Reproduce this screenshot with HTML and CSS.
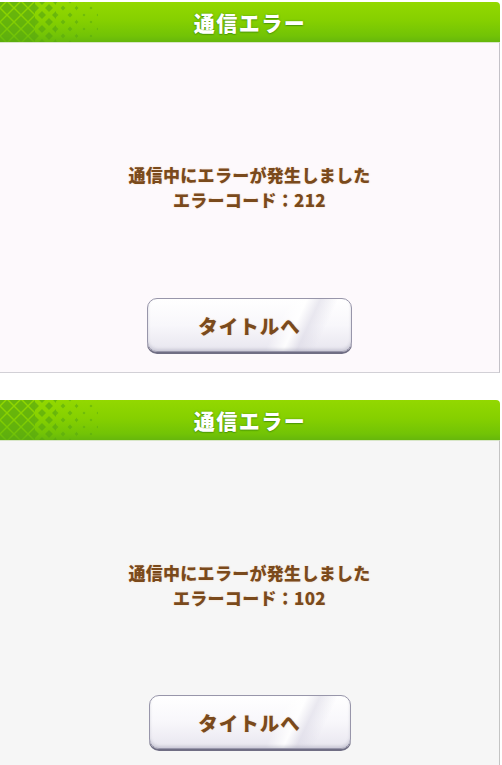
FILE: index.html
```html
<!DOCTYPE html>
<html lang="ja">
<head>
    <meta charset="UTF-8">
    <meta name="viewport" content="width=device-width, initial-scale=1.0">
    <title>通信エラー</title>
    <link rel="stylesheet" href="styles.css">
</head>
<body>
    <div class="dialog dialog-first">
        <div class="dialog-header">
            <svg class="header-pattern" width="110" height="40" viewBox="0 0 110 40">
                <defs>
                    <pattern id="dotsA" width="14" height="14" patternUnits="userSpaceOnUse" x="0" y="-1">
                        <g fill="#58a810" fill-opacity="0.7">
                            <polygon points="0,-6 6,0 0,6 -6,0" />
                            <polygon points="14,-6 20,0 14,6 8,0" />
                            <polygon points="0,8 6,14 0,20 -6,14" />
                            <polygon points="14,8 20,14 14,20 8,14" />
                            <polygon points="7,1 13,7 7,13 1,7" />
                        </g>
                    </pattern>
                    <pattern id="dotsB" width="14" height="14" patternUnits="userSpaceOnUse" x="0" y="-1">
                        <g fill="#58a810" fill-opacity="0.65">
                            <polygon points="0,-4 4,0 0,4 -4,0" />
                            <polygon points="14,-4 18,0 14,4 10,0" />
                            <polygon points="0,10 4,14 0,18 -4,14" />
                            <polygon points="14,10 18,14 14,18 10,14" />
                            <polygon points="7,3 11,7 7,11 3,7" />
                        </g>
                    </pattern>
                    <pattern id="dotsC" width="14" height="14" patternUnits="userSpaceOnUse" x="0" y="-1">
                        <g fill="#58a810" fill-opacity="0.6">
                            <polygon points="0,-2.5 2.5,0 0,2.5 -2.5,0" />
                            <polygon points="14,-2.5 16.5,0 14,2.5 11.5,0" />
                            <polygon points="0,11.5 2.5,14 0,16.5 -2.5,14" />
                            <polygon points="14,11.5 16.5,14 14,16.5 11.5,14" />
                            <polygon points="7,4.5 9.5,7 7,9.5 4.5,7" />
                        </g>
                    </pattern>
                    <pattern id="dotsD" width="14" height="14" patternUnits="userSpaceOnUse" x="0" y="-1">
                        <g fill="#58a810" fill-opacity="0.5">
                            <circle cx="7" cy="7" r="1.3" />
                            <circle cx="0" cy="0" r="1.3" />
                            <circle cx="14" cy="0" r="1.3" />
                            <circle cx="0" cy="14" r="1.3" />
                            <circle cx="14" cy="14" r="1.3" />
                        </g>
                    </pattern>
                </defs>
                <rect x="0" y="0" width="35" height="40" fill="url(#dotsA)" />
                <rect x="35" y="0" width="21" height="40" fill="url(#dotsB)" />
                <rect x="56" y="0" width="21" height="40" fill="url(#dotsC)" />
                <rect x="77" y="0" width="21" height="40" fill="url(#dotsD)" />
            </svg>
            <h2 class="dialog-title">通信エラー</h2>
        </div>
        <div class="dialog-body">
            <p class="message">通信中にエラーが発生しました<br>エラーコード：212</p>
            <button class="title-button">タイトルへ</button>
        </div>
    </div>

    <div class="dialog dialog-second">
        <div class="dialog-header">
            <svg class="header-pattern" width="110" height="40" viewBox="0 0 110 40">
                <rect x="0" y="0" width="35" height="40" fill="url(#dotsA)" />
                <rect x="35" y="0" width="21" height="40" fill="url(#dotsB)" />
                <rect x="56" y="0" width="21" height="40" fill="url(#dotsC)" />
                <rect x="77" y="0" width="21" height="40" fill="url(#dotsD)" />
            </svg>
            <h2 class="dialog-title">通信エラー</h2>
        </div>
        <div class="dialog-body">
            <p class="message">通信中にエラーが発生しました<br>エラーコード：102</p>
            <button class="title-button">タイトルへ</button>
        </div>
    </div>
</body>
</html>
```

FILE: styles.css
```css
body {
    margin: 0;
    background-color: #ffffff;
    font-family: "Noto Sans CJK JP", "Noto Sans", sans-serif;
    overflow: hidden;
}

.dialog {
    width: 500px;
}

.dialog-first {
    margin-top: 2px;
}

.dialog-second {
    margin-top: 27px;
}

.dialog-header {
    position: relative;
    height: 40px;
    background: linear-gradient(180deg, #93d800 0%, #86d000 45%, #72c306 85%, #66b70c 100%);
    border-top-right-radius: 4px;
    display: flex;
    align-items: center;
    justify-content: center;
}

.header-pattern {
    position: absolute;
    left: 0;
    top: 0;
}

.dialog-title {
    margin: 0;
    font-size: 21px;
    font-weight: 900;
    color: #ffffff;
    letter-spacing: 1.5px;
    text-shadow: 0 0 2px #4e9a08, 0 1px 1px #4e9a08;
}

.dialog-body {
    display: flex;
    flex-direction: column;
    align-items: center;
    box-sizing: border-box;
    padding-top: 119px;
    border-top: 1px solid #d8e6c8;
}

.dialog-first .dialog-body {
    height: 331px;
    background-color: #fdf9fc;
    border-right: 1px solid #c4c2c8;
    border-bottom: 1px solid #d2d0d6;
}

.dialog-second .dialog-body {
    height: 325px;
    background-color: #f6f6f6;
    border-right: 1px solid #c4c4c4;
}

.message {
    margin: 0;
    font-size: 17px;
    font-weight: 900;
    line-height: 25px;
    text-align: center;
    color: #7a4a1c;
    letter-spacing: 0.3px;
    text-shadow: 0 0 2px #f3d9bd;
}

.title-button {
    margin-top: 86px;
    width: 205px;
    height: 54px;
    border: 1.5px solid #9896aa;
    border-radius: 10px;
    background:
        linear-gradient(115deg, transparent 62%, rgba(255, 255, 255, 0.9) 70%, rgba(220, 218, 230, 0.6) 76%, transparent 84%),
        linear-gradient(180deg, #ffffff 0%, #f8f7fb 50%, #e8e6ef 100%);
    box-shadow: 0 2px 0 #706e84, inset 0 -2px 3px rgba(150, 148, 170, 0.35);
    font-family: "Noto Sans CJK JP", "Noto Sans", sans-serif;
    font-size: 19.5px;
    font-weight: 900;
    color: #7a4a1c;
    letter-spacing: 1px;
    text-shadow: 0 0 2px #f3d9bd;
    cursor: pointer;
}

.dialog-second .title-button {
    margin-top: 85px;
    width: 202px;
}
```
